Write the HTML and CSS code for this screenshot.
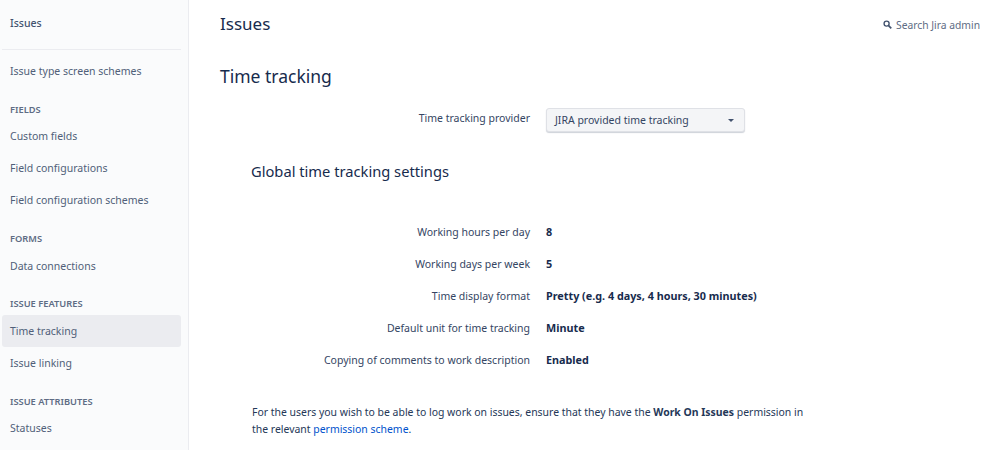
FILE: index.html
```html
<!DOCTYPE html>
<html lang="en">
<head>
<meta charset="utf-8">
<title>Time tracking</title>
<link rel="stylesheet" href="styles.css">
</head>
<body>
<div class="page">
  <nav class="sidebar">
    <div class="side-title">Issues</div>
    <div class="side-rule"></div>
    <a class="side-item first">Issue type screen schemes</a>
    <div class="side-head">FIELDS</div>
    <a class="side-item">Custom fields</a>
    <a class="side-item">Field configurations</a>
    <a class="side-item">Field configuration schemes</a>
    <div class="side-head">FORMS</div>
    <a class="side-item">Data connections</a>
    <div class="side-head">ISSUE FEATURES</div>
    <a class="side-item active">Time tracking</a>
    <a class="side-item">Issue linking</a>
    <div class="side-head">ISSUE ATTRIBUTES</div>
    <a class="side-item">Statuses</a>
  </nav>
  <main class="main">
    <header class="topbar">
      <h1 class="page-title">Issues</h1>
      <div class="search">
        <svg class="search-icon" viewBox="0 0 10 10" width="9" height="9"><circle cx="4" cy="4" r="2.8" fill="none" stroke="#42526e" stroke-width="1.5"/><path d="M6.2 6.2 9.2 9.2" stroke="#42526e" stroke-width="1.9"/></svg>
        <span>Search Jira admin</span>
      </div>
    </header>
    <h2 class="section-title">Time tracking</h2>
    <div class="provider">
      <div class="label provider-label">Time tracking provider</div>
      <div class="select"><span>JIRA provided time tracking</span><i class="caret"></i></div>
    </div>
    <h3 class="sub-title">Global time tracking settings</h3>
    <div class="settings">
      <div class="row"><div class="label">Working hours per day</div><div class="value">8</div></div>
      <div class="row"><div class="label">Working days per week</div><div class="value">5</div></div>
      <div class="row"><div class="label">Time display format</div><div class="value">Pretty (e.g. 4 days, 4 hours, 30 minutes)</div></div>
      <div class="row"><div class="label">Default unit for time tracking</div><div class="value">Minute</div></div>
      <div class="row"><div class="label">Copying of comments to work description</div><div class="value">Enabled</div></div>
    </div>
    <p class="note">For the users you wish to be able to log work on issues, ensure that they have the <b>Work On Issues</b> permission in the relevant <a class="link">permission scheme</a>.</p>
  </main>
</div>
</body>
</html>
```
FILE: styles.css
```css
* { box-sizing: border-box; }
html, body { margin: 0; height: 100%; }
body {
  background: #fff;
  color: #172b4d;
  font-family: "Noto Sans", "Open Sans", sans-serif;
  font-size: 10.5px;
  overflow: hidden;
}
.page { display: flex; height: 450px; overflow: hidden; }
.sidebar {
  width: 189px;
  flex: none;
  background: #fafbfc;
  border-right: 1px solid #ebecf0;
  padding: 0 7px 0 2px;
}
.side-title {
  height: 49px;
  padding: 15px 0 0 8px;
  line-height: 16px;
  color: #42526e;
  font-weight: 500;
}
.side-rule { height: 1px; background: #ebecf0; }
.side-item {
  display: block;
  height: 32px;
  line-height: 32px;
  padding-left: 8px;
  color: #505f79;
  border-radius: 3px;
}
.side-item.first { margin-top: 5px; }
.side-item.active { background: #ebecf0; }
.side-head {
  height: 33.33px;
  padding: 16.6px 0 0 8px;
  line-height: 12px;
  font-size: 9.3px;
  font-weight: 600;
  color: #5e6c84;
}
.main { flex: 1; padding: 0 19px 0 31px; min-width: 0; }
.topbar { display: flex; justify-content: space-between; height: 48px; }
.page-title {
  margin: 11px 0 0;
  font-size: 17px;
  line-height: 26px;
  font-weight: 400;
  color: #172b4d;
}
.search { display: flex; align-items: center; gap: 4px; height: 49px; color: #5e6c84; font-size: 10.3px; }
.search-icon { flex: none; }
.section-title {
  margin: 15px 0 0;
  font-size: 17.5px;
  line-height: 26px;
  font-weight: 400;
}
.provider { display: flex; margin-top: 19px; height: 24px; }
.label { width: 310px; flex: none; text-align: right; color: #344563; }
.provider-label { line-height: 18px; padding-top: 1px; }
.select {
  margin-left: 16px;
  width: 199px;
  height: 24px;
  display: flex;
  justify-content: space-between;
  align-items: center;
  padding: 0 10px 0 8px;
  background: #f4f5f7;
  border: 1px solid #dfe1e6;
  border-radius: 3px;
  box-shadow: 0 1px 1px rgba(9,30,66,.2);
  color: #344563;
}
.caret {
  border-left: 3px solid transparent;
  border-right: 3px solid transparent;
  border-top: 3px solid #42526e;
}
.sub-title {
  margin: 28px 0 0 31px;
  font-size: 14.7px;
  line-height: 22px;
  font-weight: 400;
}
.settings { margin-top: 34px; }
.row { display: flex; height: 32px; line-height: 32px; }
.value { margin-left: 16px; font-weight: 700; font-size: 10.8px; }
.note {
  margin: 28px 0 0 32px;
  width: 566px;
  font-size: 10.45px;
  line-height: 17px;
  color: #253858;
}
.note b { font-weight: 700; }
.link { color: #0052cc; }
```
